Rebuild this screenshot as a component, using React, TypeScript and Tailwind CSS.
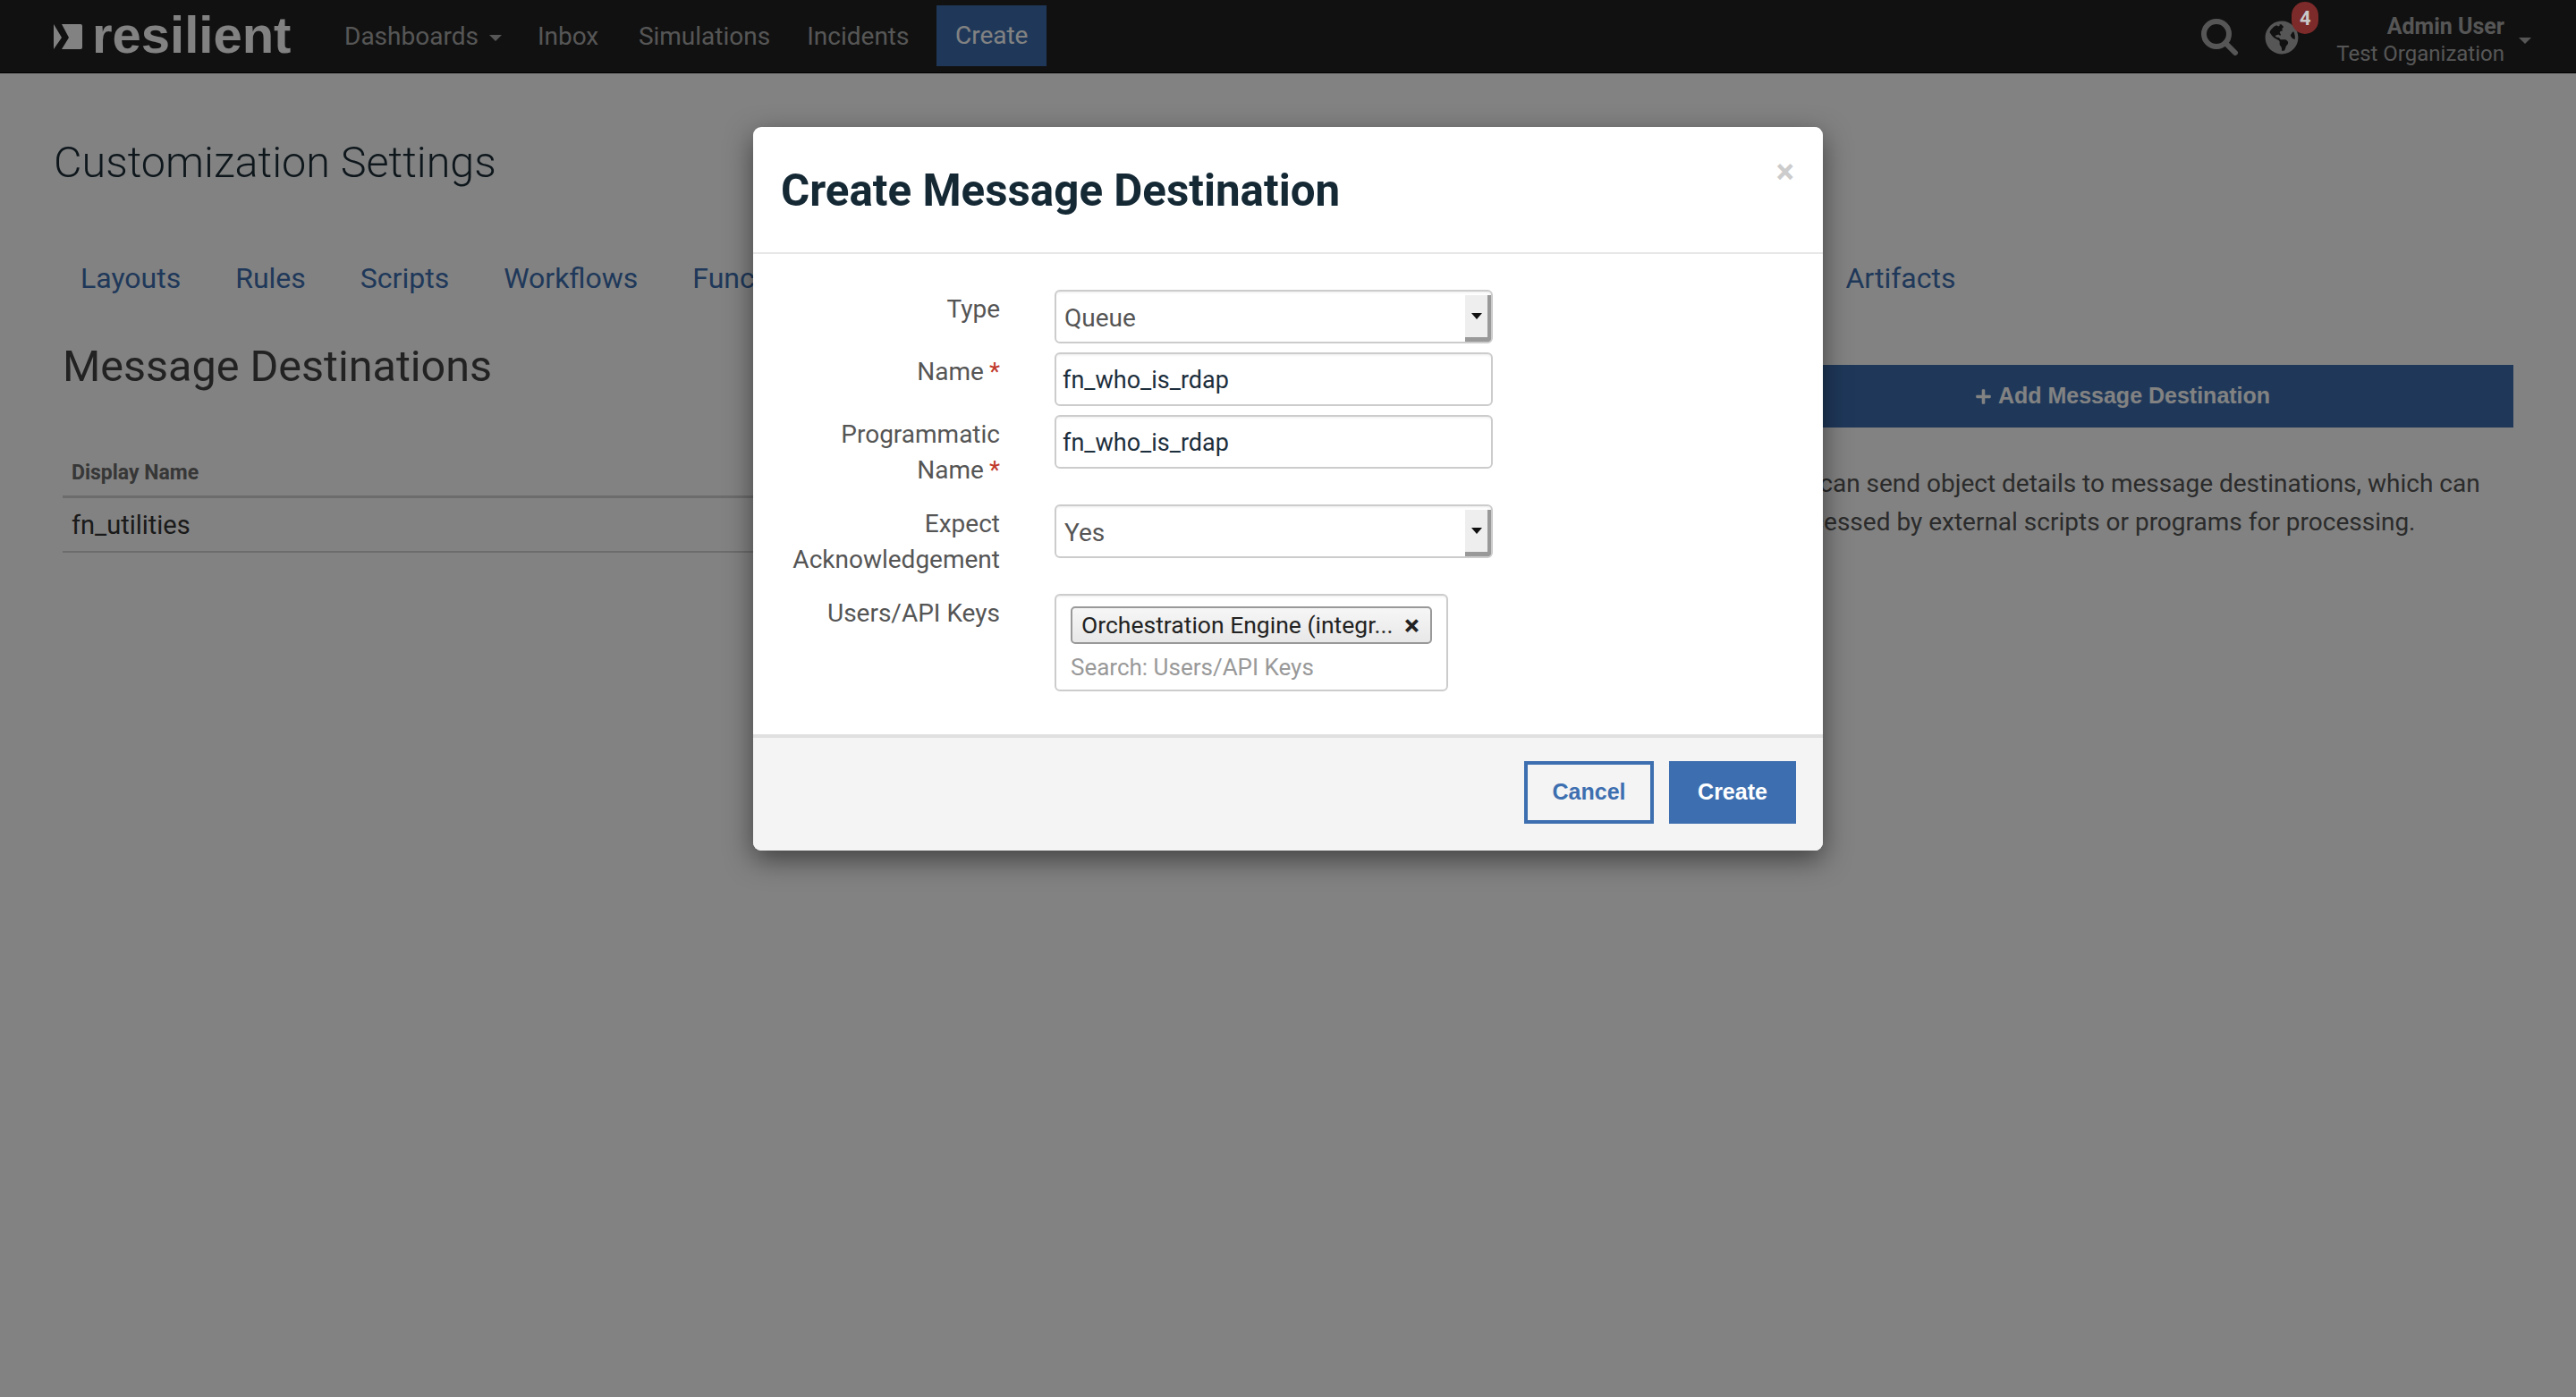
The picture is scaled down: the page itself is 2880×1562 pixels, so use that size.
import { FaGlobeAmericas, FaPlus } from 'react-icons/fa'

const NAV_ITEMS = [
  { label: 'Inbox', cls: 'ml-[40px] w-[71px]' },
  { label: 'Simulations', cls: 'ml-[42px]' },
  { label: 'Incidents', cls: 'ml-[41px] w-[118px]' },
]

const TABS = ['Layouts', 'Rules', 'Scripts', 'Workflows', 'Functions']

function Caret({ cls }: { cls: string }) {
  return <span className={`inline-block border-x-[7px] border-t-[7px] border-x-transparent ${cls}`} />
}

function SelectBox({ value }: { value: string }) {
  return (
    <div className="flex w-[490px] h-[60px] rounded-[6px] border-2 border-[#cccccc] bg-white shadow-[inset_0_3px_3px_-2px_rgba(0,0,0,0.08)] overflow-hidden">
      <span className="flex-1 pl-[9px] pt-[2px] leading-[56px] text-[28px] text-[#555555]">{value}</span>
      <span className="flex items-center justify-center w-[29px] mt-[4px] bg-[#eeeeee] border-r-[4px] border-b-[5px] border-[#999999]">
        <span className="border-x-[6px] border-t-[7px] border-x-transparent border-t-[#111111]" />
      </span>
    </div>
  )
}

function TextBox({ value }: { value: string }) {
  return (
    <div className="w-[490px] h-[60px] rounded-[6px] border-2 border-[#cccccc] bg-white pl-[7px] pt-[1px] leading-[56px] text-[27px] text-[#1c2e3c] shadow-[inset_0_3px_3px_-2px_rgba(0,0,0,0.08)]">
      {value}
    </div>
  )
}

function FieldRow({ label, required, cls, children }: { label: string[]; required?: boolean; cls: string; children: React.ReactNode }) {
  return (
    <div className={`flex ${cls}`}>
      <div className="w-[276px] shrink-0 pt-[2px] text-right text-[28px] leading-[40px] text-[#555555]">
        {label.map((line, i) => (
          <div key={line}>
            {line}
            {required && i === label.length - 1 && <span className="ml-[6px] text-[#c0392b]">*</span>}
          </div>
        ))}
      </div>
      <div className="ml-[61px]">{children}</div>
    </div>
  )
}

export default function App() {
  return (
    <div className="relative w-full h-[1562px] overflow-hidden bg-white font-['Roboto',sans-serif]">
      <header className="flex items-center h-[82px] pl-[60px] bg-[#222222] border-b border-black">
        <svg width="33" height="30" viewBox="0 0 33 30" className="mt-[3px] shrink-0">
          <path d="M0 0 L9 15 L0 28 Z" fill="#ffffff" />
          <path d="M9 0 H30 Q32 0 32 2 V26 Q32 28 30 28 H9 L17 15 Z" fill="#ffffff" />
        </svg>
        <span className="ml-[10px] mb-[4px] w-[222px] text-[58px] leading-[60px] font-bold text-white font-['Liberation_Sans',sans-serif]">resilient</span>
        <nav className="flex items-center ml-[60px] pt-[1px] text-[28px] text-[#aaaaaa]">
          <span>Dashboards</span>
          <Caret cls="ml-[12px] mt-[3px] border-t-[#aaaaaa]" />
          {NAV_ITEMS.map(item => (
            <span key={item.label} className={item.cls}>{item.label}</span>
          ))}
          <span className="ml-[27px] flex items-center justify-center w-[123px] h-[68px] mb-[2px] bg-[#3d6fb0] text-white">Create</span>
        </nav>
        <div className="flex items-center ml-auto">
          <svg width="42" height="42" viewBox="0 0 42 42" fill="none" stroke="#aaaaaa" strokeWidth="6" strokeLinecap="round" className="mt-[2px]">
            <circle cx="17" cy="17" r="14" />
            <path d="M27 27 L38 38" />
          </svg>
          <span className="relative ml-[29px] mt-[3px]">
            <FaGlobeAmericas className="block w-[38px] h-[38px] text-[#aaaaaa]" />
            <span className="absolute z-20 left-[30px] top-[-21px] flex items-center justify-center w-[30px] h-[36px] rounded-full bg-[#7d2a2a] text-[22px] font-bold text-[#c8c8c8]">4</span>
          </span>
          <div className="ml-[42px] mr-[16px] pt-[9px] text-right">
            <div className="text-[25px] leading-[30px] font-bold text-[#aaaaaa]">Admin User</div>
            <div className="text-[24px] leading-[30px] text-[#aaaaaa]">Test Organization</div>
          </div>
          <Caret cls="mr-[50px] mt-[10px] border-t-[#aaaaaa]" />
        </div>
      </header>

      <main>
        <h1 className="ml-[60px] mt-[70px] text-[48.5px] leading-[60px] font-light text-[#1a2b36]">Customization Settings</h1>
        <div className="flex ml-[90px] mt-[79px] text-[32px] leading-[40px] text-[#3d6fb0]">
          {TABS.map(tab => (
            <span key={tab} className="mr-[61px]">{tab}</span>
          ))}
          <span className="ml-[1088px]">Artifacts</span>
        </div>
        <div className="flex mt-[29px]">
          <section className="ml-[70px] flex-1 pt-[20px]">
            <h2 className="text-[48.5px] leading-[60px] text-[#444444]">Message Destinations</h2>
            <div className="mt-[74px] pl-[10px] pb-[10px] text-[23px] leading-[30px] font-bold text-[#6c6c6c] border-b-[3px] border-[#d5d5d5]">Display Name</div>
            <div className="pl-[10px] h-[61px] pt-[10px] text-[29px] leading-[40px] text-[#333333] border-b-2 border-[#d5d5d5]">fn_utilities</div>
          </section>
          <aside className="w-[874px] mr-[70px] pt-[48px]">
            <button className="flex items-center justify-center gap-[7px] w-full h-[70px] bg-[#3d6fb0] text-[25px] font-bold text-white font-['Liberation_Sans',sans-serif]">
              <FaPlus className="w-[19px] h-[19px]" />
              Add Message Destination
            </button>
            <p className="mt-[41px] text-[28px] leading-[43px] text-[#555555]">
              <span className="block pl-[44px]">You can send object details to message destinations, which can</span>
              <span className="block pl-[21px]">be accessed by external scripts or programs for processing.</span>
            </p>
          </aside>
        </div>
      </main>

      {/* backdrop and modal */}
      <div className="absolute inset-0 z-10 bg-black/[0.49]" />
      <div className="absolute z-30 left-[842px] top-[142px] w-[1196px] h-[809px] rounded-[9px] bg-white overflow-hidden shadow-[0_10px_30px_rgba(0,0,0,0.5)]">
        <div className="relative h-[142px] border-b-2 border-[#e7e7e7] pl-[31px] pt-[41px]">
          <h3 className="text-[49.3px] leading-[60px] font-bold text-[#152935]">Create Message Destination</h3>
          <span className="absolute right-[32px] top-[30px] text-[38px] leading-[40px] font-bold text-[#cccccc]">×</span>
        </div>
        <div className="pt-[40px] pb-[48px]">
          <FieldRow label={['Type']} cls="mb-[10px]"><SelectBox value="Queue" /></FieldRow>
          <FieldRow label={['Name']} required cls="mb-[10px]"><TextBox value="fn_who_is_rdap" /></FieldRow>
          <FieldRow label={['Programmatic', 'Name']} required cls="mb-[18px]"><TextBox value="fn_who_is_rdap" /></FieldRow>
          <FieldRow label={['Expect', 'Acknowledgement']} cls="mb-[18px]"><SelectBox value="Yes" /></FieldRow>
          <FieldRow label={['Users/API Keys']} cls="">
            <div className="w-[440px] h-[109px] rounded-[6px] border-2 border-[#cccccc] pl-[16px] pt-[12px] shadow-[inset_0_3px_3px_-2px_rgba(0,0,0,0.08)]">
              <div className="flex items-center justify-between w-[404px] h-[42px] rounded-[5px] border-2 border-[#999999] bg-gradient-to-b from-[#f6f6f6] to-[#e8e8e8] pl-[10px] pr-[12px] text-[26.5px] text-[#222222]">
                <span className="whitespace-nowrap">Orchestration Engine (integr...</span>
                <span className="text-[32px] font-bold leading-none">×</span>
              </div>
              <div className="mt-[8px] text-[26px] leading-[36px] text-[#999999]">Search: Users/API Keys</div>
            </div>
          </FieldRow>
        </div>
        <div className="flex justify-end gap-[17px] h-[130px] border-t-4 border-[#e0e0e0] bg-[#f4f4f4] pt-[26px] pr-[30px] text-[25px] font-bold font-['Liberation_Sans',sans-serif]">
          <button className="w-[145px] h-[70px] border-4 border-[#3d6fb0] text-[#3d6fb0]">Cancel</button>
          <button className="w-[142px] h-[70px] bg-[#3d6fb0] text-white">Create</button>
        </div>
      </div>
    </div>
  )
}
